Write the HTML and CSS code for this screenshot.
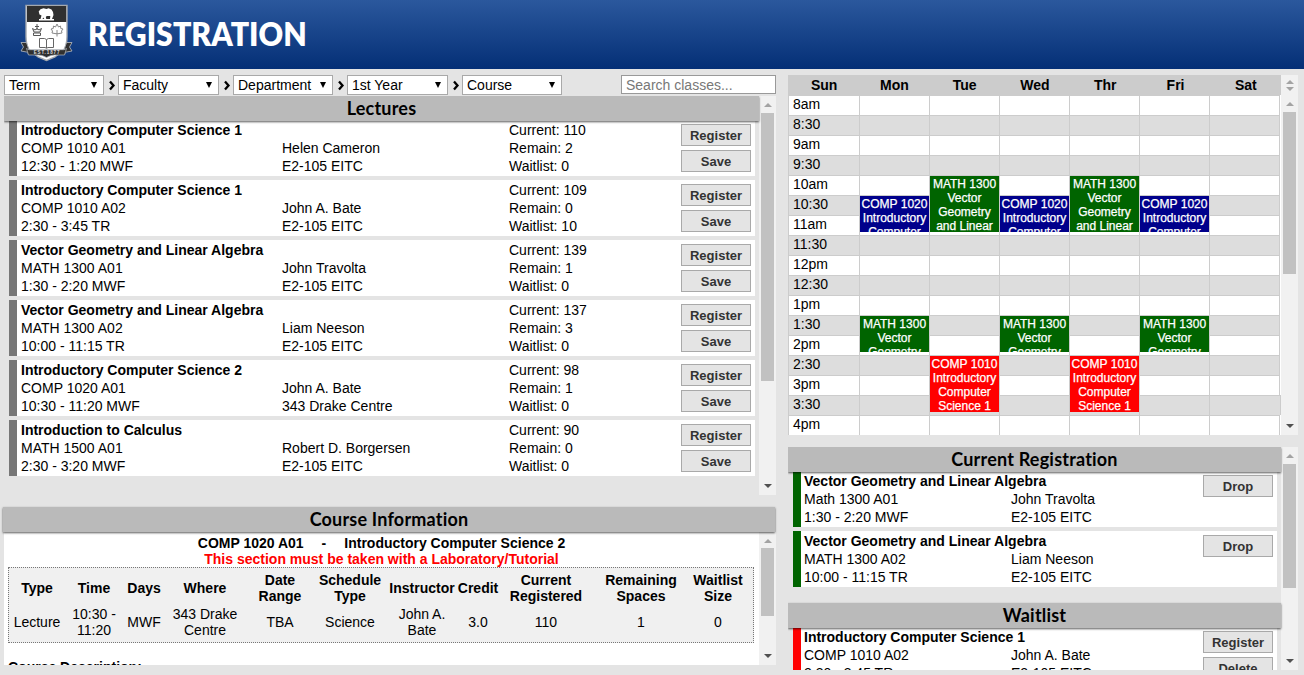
FILE: index.html
```html
<!DOCTYPE html>
<html lang="en">
<head>
<meta charset="utf-8">
<title>Registration</title>
<link rel="stylesheet" href="styles.css">
</head>
<body>
<header class="banner">
  <svg class="crest" width="54" height="58" viewBox="0 0 54 58">
    <path d="M6 1.500h41v31q0 8-3 13L35 53l-8.500 3.500L18 53 9 45.500q-3-5-3-13z" fill="#fff" stroke="#a4a8ae" stroke-width="1.400"/>
    <path d="M7 2h39.200v16H7z" fill="#303030"/>
    <path d="M19 16.500v-1.500h15v1.500zM20.500 15l1-3.500-2-1-.8-3 1.800-2.300 3-1 3 .8 2-.8 3 1.300 1.500 2.500.5 3-1.500 4h-2l.3-3h-3.500l-1 1 .5 2h-2l-1-1.500-.8 1.500z" fill="#fff"/>
    <g fill="none" stroke="#555" stroke-width="1">
      <path d="M17 20v6M15 22.500h4M12.500 24.500l1.500 3.500h6l1.500-3.500-2.500 1.500-2-1.500-2 1.500zM13.500 29h7v2.500h-7z"/>
      <path d="M37 20l1.500 3 2-1 .3 2.500 2.200.5-1.500 2 .5 2-4 .7h-2l-4-.7.5-2-1.500-2 2.200-.5.3-2.500 2 1zM37 26v6.500" stroke="#888"/>
      <path d="M19.500 34.500h5l2 1 2-1h5v9h-5.500l-1.500.8-1.500-.8h-5.500zM26.500 36v8" stroke="#666"/>
    </g>
    <path d="M1 38.500h5.500l2 6 1 6-3-2.500-5.500-1 2.500-4zM52 38.500h-5.500l-2 6-1 6 3-2.500 5.500-1-2.500-4z" fill="#303030" stroke="#b8bdc4" stroke-width=".8"/>
    <path d="M6.500 44.500l2.500 1.200h35l2.500-1.200-2 6.500H34.500q-4 0-8 2.500-4-2.500-8-2.500H8.500z" fill="#303030" stroke="#b8bdc4" stroke-width=".7"/>
    <text x="27" y="50" text-anchor="middle" class="crest-text">EST.1877</text>
  </svg>
  <h1 class="site-title">REGISTRATION</h1>
</header>
<main class="page">
  <div class="left">
    <div class="filters">
      <div class="select">Term<i class="caret"></i></div><svg class="sep" width="14" height="20"><path d="M6 6.500L9.500 10.500l-3.500 4"/></svg>
      <div class="select wide">Faculty<i class="caret"></i></div><svg class="sep" width="14" height="20"><path d="M6 6.500L9.500 10.500l-3.500 4"/></svg>
      <div class="select">Department<i class="caret"></i></div><svg class="sep" width="14" height="20"><path d="M6 6.500L9.500 10.500l-3.500 4"/></svg>
      <div class="select wide">1st Year<i class="caret"></i></div><svg class="sep" width="14" height="20"><path d="M6 6.500L9.500 10.500l-3.500 4"/></svg>
      <div class="select">Course<i class="caret"></i></div>
      <div class="search">Search classes...</div>
    </div>
    <section class="scroller lectures">
      <div class="content">
        <h2 class="heading">Lectures</h2>
        <div class="list">
          <article class="course"><div class="c1"><b>Introductory Computer Science 1</b><br>COMP 1010 A01<br>12:30 - 1:20 MWF</div><div class="c2"><br>Helen Cameron<br>E2-105 EITC</div><div class="c3">Current: 110<br>Remain: 2<br>Waitlist: 0</div><div class="actions"><span class="btn">Register</span><span class="btn">Save</span></div></article>
          <article class="course"><div class="c1"><b>Introductory Computer Science 1</b><br>COMP 1010 A02<br>2:30 - 3:45 TR</div><div class="c2"><br>John A. Bate<br>E2-105 EITC</div><div class="c3">Current: 109<br>Remain: 0<br>Waitlist: 10</div><div class="actions"><span class="btn">Register</span><span class="btn">Save</span></div></article>
          <article class="course"><div class="c1"><b>Vector Geometry and Linear Algebra</b><br>MATH 1300 A01<br>1:30 - 2:20 MWF</div><div class="c2"><br>John Travolta<br>E2-105 EITC</div><div class="c3">Current: 139<br>Remain: 1<br>Waitlist: 0</div><div class="actions"><span class="btn">Register</span><span class="btn">Save</span></div></article>
          <article class="course"><div class="c1"><b>Vector Geometry and Linear Algebra</b><br>MATH 1300 A02<br>10:00 - 11:15 TR</div><div class="c2"><br>Liam Neeson<br>E2-105 EITC</div><div class="c3">Current: 137<br>Remain: 3<br>Waitlist: 0</div><div class="actions"><span class="btn">Register</span><span class="btn">Save</span></div></article>
          <article class="course"><div class="c1"><b>Introductory Computer Science 2</b><br>COMP 1020 A01<br>10:30 - 11:20 MWF</div><div class="c2"><br>John A. Bate<br>343 Drake Centre</div><div class="c3">Current: 98<br>Remain: 1<br>Waitlist: 0</div><div class="actions"><span class="btn">Register</span><span class="btn">Save</span></div></article>
          <article class="course"><div class="c1"><b>Introduction to Calculus</b><br>MATH 1500 A01<br>2:30 - 3:20 MWF</div><div class="c2"><br>Robert D. Borgersen<br>E2-105 EITC</div><div class="c3">Current: 90<br>Remain: 0<br>Waitlist: 0</div><div class="actions"><span class="btn">Register</span><span class="btn">Save</span></div></article>
        </div>
      </div>
      <div class="bar"><i class="up"></i><i class="thumb t-lectures"></i><i class="down"></i></div>
    </section>
    <h2 class="heading info-heading">Course Information</h2>
    <section class="scroller info">
      <div class="content">
        <p class="info-title">COMP 1020 A01<span class="dash">-</span>Introductory Computer Science 2</p>
        <p class="info-note">This section must be taken with a Laboratory/Tutorial</p>
        <div class="details">
          <div class="row head"><b>Type</b><b>Time</b><b>Days</b><b>Where</b><b>Date<br>Range</b><b>Schedule<br>Type</b><b>Instructor</b><b>Credit</b><b>Current<br>Registered</b><b>Remaining<br>Spaces</b><b>Waitlist<br>Size</b></div>
          <div class="row"><span>Lecture</span><span>10:30 -<br>11:20</span><span>MWF</span><span>343 Drake<br>Centre</span><span>TBA</span><span>Science</span><span>John A.<br>Bate</span><span>3.0</span><span>110</span><span>1</span><span>0</span></div>
        </div>
        <p class="desc">Course Description:</p>
      </div>
      <div class="bar"><i class="up"></i><i class="thumb t-info"></i><i class="down"></i></div>
    </section>
  </div>
  <div class="right">
    <div class="cal-head">
      <div class="days"><b>Sun</b><b>Mon</b><b>Tue</b><b>Wed</b><b>Thr</b><b>Fri</b><b>Sat</b></div>
      <div class="bar mini"><i class="up"></i><i class="down dim"></i></div>
    </div>
    <section class="scroller calendar">
      <div class="content grid">
        <div class="slot"><span>8am</span><i></i><i></i><i></i><i></i><i></i><i></i></div>
        <div class="slot"><span>8:30</span><i></i><i></i><i></i><i></i><i></i><i></i></div>
        <div class="slot"><span>9am</span><i></i><i></i><i></i><i></i><i></i><i></i></div>
        <div class="slot"><span>9:30</span><i></i><i></i><i></i><i></i><i></i><i></i></div>
        <div class="slot"><span>10am</span><i></i><i></i><i></i><i></i><i></i><i></i></div>
        <div class="slot"><span>10:30</span><i></i><i></i><i></i><i></i><i></i><i></i></div>
        <div class="slot"><span>11am</span><i></i><i></i><i></i><i></i><i></i><i></i></div>
        <div class="slot"><span>11:30</span><i></i><i></i><i></i><i></i><i></i><i></i></div>
        <div class="slot"><span>12pm</span><i></i><i></i><i></i><i></i><i></i><i></i></div>
        <div class="slot"><span>12:30</span><i></i><i></i><i></i><i></i><i></i><i></i></div>
        <div class="slot"><span>1pm</span><i></i><i></i><i></i><i></i><i></i><i></i></div>
        <div class="slot"><span>1:30</span><i></i><i></i><i></i><i></i><i></i><i></i></div>
        <div class="slot"><span>2pm</span><i></i><i></i><i></i><i></i><i></i><i></i></div>
        <div class="slot"><span>2:30</span><i></i><i></i><i></i><i></i><i></i><i></i></div>
        <div class="slot"><span>3pm</span><i></i><i></i><i></i><i></i><i></i><i></i></div>
        <div class="slot full"><span>3:30</span><i></i><i></i><i></i><i></i><i></i><i></i></div>
        <div class="slot"><span>4pm</span><i></i><i></i><i></i><i></i><i></i><i></i></div>
        <div class="event blue mon at1030">COMP 1020 Introductory Computer</div>
        <div class="event blue wed at1030">COMP 1020 Introductory Computer</div>
        <div class="event blue fri at1030">COMP 1020 Introductory Computer</div>
        <div class="event green tue at10">MATH 1300 Vector Geometry and Linear</div>
        <div class="event green thr at10">MATH 1300 Vector Geometry and Linear</div>
        <div class="event green mon at130">MATH 1300 Vector Geometry</div>
        <div class="event green wed at130">MATH 1300 Vector Geometry</div>
        <div class="event green fri at130">MATH 1300 Vector Geometry</div>
        <div class="event red tue at230">COMP 1010 Introductory Computer Science 1</div>
        <div class="event red thr at230">COMP 1010 Introductory Computer Science 1</div>
      </div>
      <div class="bar"><i class="up"></i><i class="thumb t-cal"></i><i class="down"></i></div>
    </section>
    <section class="scroller registration">
      <div class="content">
        <h2 class="heading">Current Registration</h2>
        <div class="list">
          <article class="course enrolled"><div class="c1"><b>Vector Geometry and Linear Algebra</b><br>Math 1300 A01<br>1:30 - 2:20 MWF</div><div class="c2"><br>John Travolta<br>E2-105 EITC</div><div class="actions"><span class="btn">Drop</span></div></article>
          <article class="course enrolled"><div class="c1"><b>Vector Geometry and Linear Algebra</b><br>MATH 1300 A02<br>10:00 - 11:15 TR</div><div class="c2"><br>Liam Neeson<br>E2-105 EITC</div><div class="actions"><span class="btn">Drop</span></div></article>
        </div>
        <h2 class="heading waitlist-heading">Waitlist</h2>
        <div class="list">
          <article class="course waiting"><div class="c1"><b>Introductory Computer Science 1</b><br>COMP 1010 A02<br>2:30 - 3:45 TR</div><div class="c2"><br>John A. Bate<br>E2-105 EITC</div><div class="actions"><span class="btn">Register</span><span class="btn">Delete</span></div></article>
        </div>
      </div>
      <div class="bar"><i class="up"></i><i class="thumb t-reg"></i><i class="down"></i></div>
    </section>
  </div>
</main>
</body>
</html>
```
FILE: styles.css
```css
* { box-sizing: border-box; }
body { margin: 0; width: 1304px; height: 675px; overflow: hidden; background: #e4e4e4; color: #000; font: 14px/18px "Liberation Sans", Arial, sans-serif; }
h1, h2, p { margin: 0; }
i { font-style: normal; }

.banner { height: 69px; display: flex; align-items: flex-start; padding: 4px 0 0 20px; background: linear-gradient(#2b589d, #042f76); }
.crest { flex: none; }
.crest-text { font: bold 4.500px "Liberation Sans", sans-serif; fill: #ddd; letter-spacing: .9px; }
.site-title { margin: 9px 0 0 14px; font: 800 32.500px/42px Lato, sans-serif; color: #fff; transform: scaleX(.932); transform-origin: left; white-space: nowrap; }

.page { display: flex; gap: 12px; padding: 6px 0 0 4px; }
.left { width: 772px; }
.right { width: 510px; }

.filters { display: flex; height: 21px; }
.select { width: 100px; height: 20px; border: 1px solid #a9a9a9; background: #fff; padding: 0 6px 0 4px; display: flex; justify-content: space-between; }
.select.wide { width: 101px; }
.caret { margin-top: 6px; height: 0; border: solid transparent; border-width: 6px 3.500px 0; border-top-color: #000; }
.sep { flex: none; fill: none; stroke: #000; stroke-width: 2.300; }
.search { margin-left: auto; width: 155px; height: 19px; border: 1px solid #999; background: #fff; padding: 0 4px; line-height: 18px; color: #777; }

.scroller { display: flex; overflow: hidden; }
.content { flex: 1; min-width: 0; }
.lectures { height: 399px; }
.heading { position: relative; z-index: 1; height: 25px; background: #bababa; text-align: center; font: bold 18px/25px Lato, sans-serif; letter-spacing: .2px; box-shadow: 0 1px 2px rgba(0,0,0,.65); }
.list { display: flex; flex-direction: column; gap: 4px; padding: 0 4px 0 5px; margin-top: -1px; }
.course { display: flex; height: 56px; background: #fff; border-left: 8px solid #777; padding: 1px 4px 0; }
.c1 { width: 261px; white-space: nowrap; }
.c2 { width: 227px; white-space: nowrap; }
.actions { margin: 3px 0 0 auto; display: flex; flex-direction: column; gap: 4px; }
.btn { width: 70px; height: 22px; flex: none; border: 1px solid #a9a9a9; background: #e4e4e4; color: #333; text-align: center; font-weight: bold; font-size: 13px; line-height: 21px; }

.bar { width: 17px; flex: none; background: #f1f1f1; display: flex; flex-direction: column; align-items: center; padding: 7px 0; }
.up { border: 4px solid transparent; border-top: 0; border-bottom-color: #a3a3a3; }
.down { margin-top: auto; border: 4px solid transparent; border-bottom: 0; border-top-color: #505050; }
.down.dim { border-top-color: #a3a3a3; }
.thumb { width: 13px; margin-top: 6px; background: #c1c1c1; }
.t-lectures { height: 268px; }
.t-info { height: 68px; margin-top: 5px; }
.t-cal { height: 162px; }
.t-reg { height: 124px; }

.info-heading { margin: 12px 1px 0 -1px; }
.info { height: 133px; background: #fff; }
.info-title, .info-note { text-align: center; font-weight: bold; line-height: 16px; }
.info-title { padding-top: 3px; }
.dash { padding: 0 18px; }
.info-note { color: #f00; }
.details { width: 746px; height: 76px; margin-left: 4px; border: 1px dotted #777; background: #f0f0f0; line-height: 16px; text-align: center; white-space: nowrap; }
.row { display: grid; grid-template-columns: 56px 58px 42px 80px 70px 70px 74px 38px 98px 92px 62px; align-items: center; justify-items: center; height: 34px; }
.row.head { height: 37px; padding-top: 2px; }
.desc { margin: 15px 0 0 4px; font-weight: bold; }

.cal-head { display: flex; height: 20px; }
.days { width: 493px; background: #ccc; display: flex; padding-left: 1px; }
.days b { width: 70.3px; text-align: center; line-height: 20px; }
.bar.mini { padding: 5px 0 4px; }
.calendar { height: 340px; }
.grid { position: relative; background: #fff; }
.slot { display: grid; grid-template-columns: 71px repeat(6, 70px); width: 492px; height: 20px; border: solid #ccc; border-width: 1px 1px 0 0; background: #fff; }
.slot:nth-child(even) { background: #ddd; }
.slot.full { width: 493px; }
.slot span, .slot i { border-left: 1px solid #ccc; height: 19px; }
.slot span { padding-left: 4px; line-height: 17px; }
.event { position: absolute; width: 69px; height: 36px; overflow: hidden; color: #fff; text-align: center; font-size: 12px; line-height: 14px; padding-top: 1px; -webkit-text-stroke: .25px #fff; }
.mon { left: 72px; } .tue { left: 142px; } .wed { left: 212px; } .thr { left: 282px; } .fri { left: 352px; }
.at10 { top: 81px; height: 56px; }
.at1030 { top: 101px; }
.at130 { top: 221px; }
.at230 { top: 261px; height: 56px; }
.blue { background: #00008b; } .green { background: #006400; } .red { background: #f00; }

.registration { height: 223px; margin-top: 12px; }
.registration .c1 { width: 207px; }
.registration .course { padding-left: 3px; }
.enrolled { border-left-color: #006400; }
.waiting { border-left-color: #f00; }
.waitlist-heading { margin-top: 16px; }
```
